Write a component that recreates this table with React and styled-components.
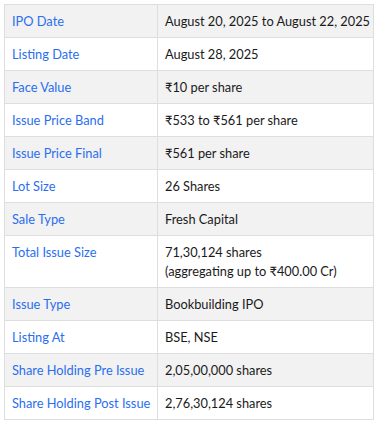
import React from "react";
import styled, { createGlobalStyle } from "styled-components";

const Global = createGlobalStyle`
  html, body { margin: 0; padding: 0; background: #fff; }
  body { font-family: Lato, "Noto Sans", sans-serif; }
`;

const Wrap = styled.div`
  padding: 4px;
`;

const Table = styled.table`
  width: 370px;
  table-layout: fixed;
  border-collapse: collapse;
  border: 1px solid #dedede;
  font-size: 12.8px;
  line-height: 19px;
`;

const Row = styled.tr`
  background: ${(p) => (p.$shaded ? "#f2f2f2" : "#ffffff")};
`;

const Label = styled.td`
  width: 153px;
  box-sizing: border-box;
  border: 1px solid #dedede;
  padding: 7px 4px 6px 7px;
  color: #2a6ef0;
  vertical-align: top;
  white-space: nowrap;
`;

const Value = styled.td`
  border: 1px solid #dedede;
  padding: 7px 4px 6px 7px;
  color: #1a1a1a;
  vertical-align: top;
  white-space: nowrap;
`;

const rows = [
  ["IPO Date", "August 20, 2025 to August 22, 2025"],
  ["Listing Date", "August 28, 2025"],
  ["Face Value", "₹10 per share"],
  ["Issue Price Band", "₹533 to ₹561 per share"],
  ["Issue Price Final", "₹561 per share"],
  ["Lot Size", "26 Shares"],
  ["Sale Type", "Fresh Capital"],
  ["Total Issue Size", ["71,30,124 shares", "(aggregating up to ₹400.00 Cr)"]],
  ["Issue Type", "Bookbuilding IPO"],
  ["Listing At", "BSE, NSE"],
  ["Share Holding Pre Issue", "2,05,00,000 shares"],
  ["Share Holding Post Issue", "2,76,30,124 shares"],
];

export default function App() {
  return (
    <>
      <Global />
      <Wrap>
        <Table>
          <tbody>
            {rows.map(([label, value], i) => (
              <Row key={label} $shaded={i % 2 === 0}>
                <Label>{label}</Label>
                <Value>
                  {Array.isArray(value)
                    ? value.map((v, j) => (
                        <React.Fragment key={j}>
                          {j > 0 && <br />}
                          {v}
                        </React.Fragment>
                      ))
                    : value}
                </Value>
              </Row>
            ))}
          </tbody>
        </Table>
      </Wrap>
    </>
  );
}
